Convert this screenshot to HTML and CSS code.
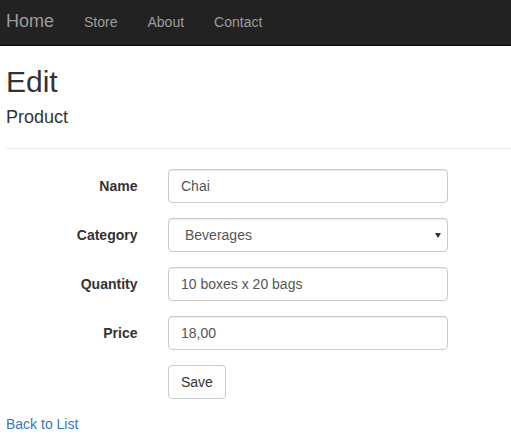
FILE: index.html
```html
<!DOCTYPE html>
<html lang="en">
<head>
<meta charset="utf-8">
<title>Edit - Product</title>
<link rel="stylesheet" href="styles.css">
</head>
<body>
<nav class="navbar">
  <a class="brand" href="#">Home</a>
  <a class="nav-link" href="#">Store</a>
  <a class="nav-link" href="#">About</a>
  <a class="nav-link" href="#">Contact</a>
</nav>
<main class="content">
  <h2 class="title">Edit</h2>
  <h4 class="subtitle">Product</h4>
  <hr class="rule">
  <form class="form">
    <div class="form-group">
      <label class="control-label" for="name">Name</label>
      <input class="form-control" id="name" type="text" value="Chai">
    </div>
    <div class="form-group">
      <label class="control-label" for="category">Category</label>
      <div class="select-wrap">
        <select class="form-control select" id="category">
          <option>Beverages</option>
        </select>
        <span class="caret"></span>
      </div>
    </div>
    <div class="form-group">
      <label class="control-label" for="quantity">Quantity</label>
      <input class="form-control" id="quantity" type="text" value="10 boxes x 20 bags">
    </div>
    <div class="form-group">
      <label class="control-label" for="price">Price</label>
      <input class="form-control" id="price" type="text" value="18,00">
    </div>
    <div class="form-group">
      <span></span>
      <div><button class="btn" type="button">Save</button></div>
    </div>
  </form>
  <div class="back"><a class="link" href="#">Back to List</a></div>
</main>
</body>
</html>
```

FILE: styles.css
```css
* { box-sizing: border-box; }

html, body {
  margin: 0;
  padding: 0;
  background: #fff;
}

body {
  font-family: "Liberation Sans", Arial, sans-serif;
  font-size: 14px;
  line-height: 20px;
  color: #333;
  overflow: hidden;
}

.navbar {
  display: flex;
  align-items: flex-start;
  height: 46px;
  background: #222;
  border-bottom: 1px solid #080808;
}

.brand {
  font-size: 18px;
  line-height: 20px;
  color: #9d9d9d;
  text-decoration: none;
  padding: 11px 15px 0 6px;
}

.nav-link {
  font-size: 14px;
  line-height: 20px;
  color: #9d9d9d;
  text-decoration: none;
  padding: 12px 15px 0;
}

.content {
  padding-left: 6px;
}

.title {
  font-size: 30px;
  line-height: 33px;
  font-weight: 500;
  margin: 19px 0 10px;
}

.subtitle {
  font-size: 18px;
  line-height: 19.8px;
  font-weight: 500;
  margin: 10px 0 10px;
}

.rule {
  border: 0;
  border-top: 1px solid #eee;
  margin: 20px 0;
  height: 0;
}

.form-group {
  display: grid;
  grid-template-columns: 132px 280px;
  column-gap: 30px;
  margin-bottom: 15px;
}

.control-label {
  text-align: right;
  font-weight: bold;
  padding-top: 7px;
  padding-right: 0.5px;
}

.form-control {
  display: block;
  width: 280px;
  height: 34px;
  padding: 6px 12px;
  font-family: inherit;
  font-size: 14px;
  line-height: 20px;
  color: #555;
  background: #fff;
  border: 1px solid #ccc;
  border-radius: 4px;
  box-shadow: inset 0 1px 1px rgba(0, 0, 0, 0.075);
  outline: none;
}

.select-wrap {
  position: relative;
  width: 280px;
}

.select {
  -webkit-appearance: none;
  appearance: none;
  padding-left: 16px;
}

.caret {
  position: absolute;
  right: 7px;
  top: 15px;
  width: 0;
  height: 0;
  border-left: 3.5px solid transparent;
  border-right: 3.5px solid transparent;
  border-top: 5px solid #333;
  pointer-events: none;
}

.btn {
  display: inline-block;
  height: 34px;
  padding: 6px 12px;
  font-family: inherit;
  font-size: 14px;
  line-height: 20px;
  color: #333;
  background: #fff;
  border: 1px solid #ccc;
  border-radius: 4px;
  cursor: pointer;
}

.back {
  line-height: 20px;
}

.link {
  color: #337ab7;
  text-decoration: none;
}
```
